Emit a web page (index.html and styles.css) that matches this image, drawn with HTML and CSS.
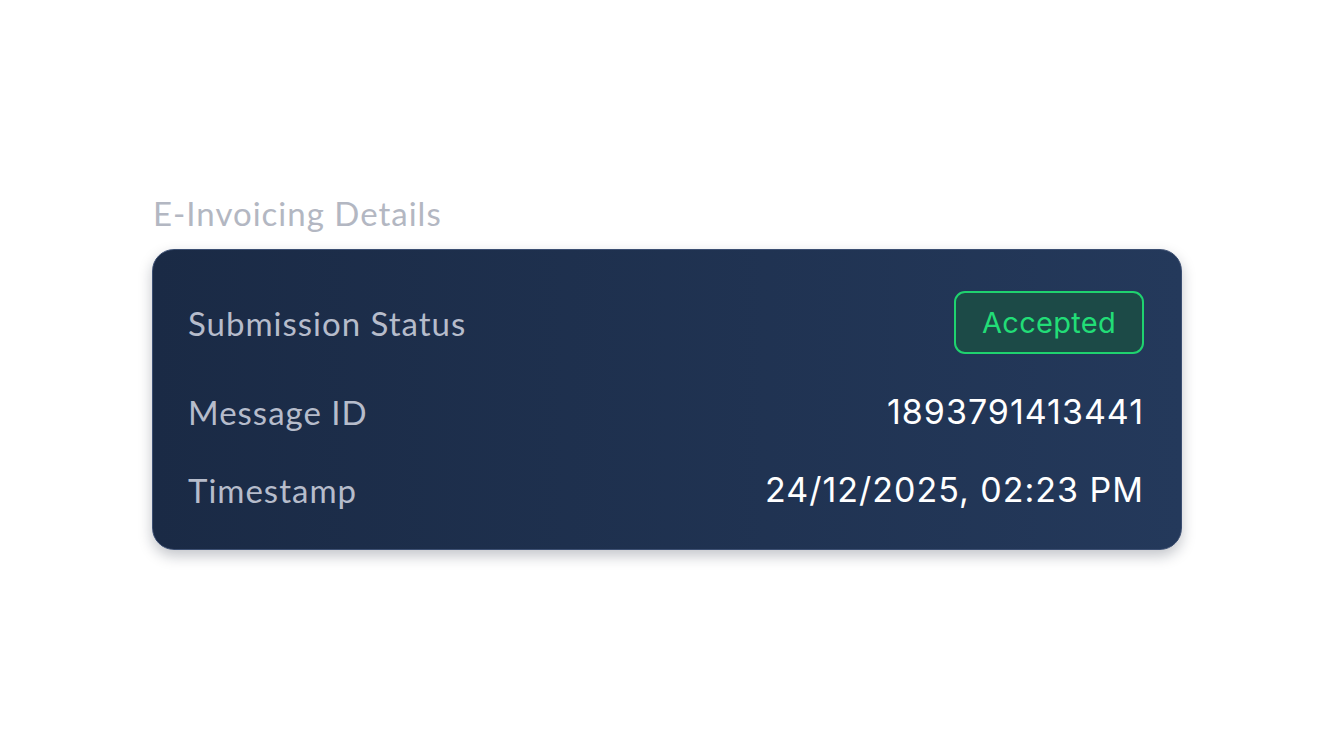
FILE: index.html
```html
<!DOCTYPE html>
<html>
<head>
<meta charset="utf-8">
<link rel="stylesheet" href="styles.css">
</head>
<body>
<main class="page">
  <section class="section">
    <h2 class="title">E-Invoicing Details</h2>
    <div class="card">
      <div class="row">
        <span class="label">Submission Status</span>
        <span class="badge">Accepted</span>
      </div>
      <div class="row">
        <span class="label">Message ID</span>
        <span class="value">1893791413441</span>
      </div>
      <div class="row">
        <span class="label">Timestamp</span>
        <span class="value">24/12/2025, 02:23 PM</span>
      </div>
    </div>
  </section>
</main>
</body>
</html>
```
FILE: styles.css
```css
html, body {
  margin: 0;
  padding: 0;
  background: #ffffff;
}
.page {
  width: 1332px;
  height: 738px;
  padding-top: 193px;
  padding-left: 152px;
  box-sizing: border-box;
}
.section {
  width: 1030px;
}
.title {
  margin: 0 0 16px 1px;
  font-family: "Lato", "Inter", sans-serif;
  font-weight: 400;
  font-size: 33px;
  letter-spacing: 1px;
  line-height: 40px;
  color: #b3b7c2;
}
.card {
  box-sizing: border-box;
  width: 1030px;
  height: 301px;
  border: 1.5px solid #3c4f72;
  border-radius: 22px;
  background: linear-gradient(90deg, #1a2a45 0%, #24395b 100%);
  box-shadow: 0 6px 14px rgba(15, 23, 42, 0.25);
  padding: 41px 37px 0 35px;
  display: flex;
  flex-direction: column;
  gap: 38px;
}
.row {
  display: flex;
  justify-content: space-between;
  align-items: center;
}
.label {
  font-family: "Lato", "Inter", sans-serif;
  font-size: 33px;
  letter-spacing: 1px;
  line-height: 40px;
  color: #b6bccb;
}
.value {
  font-family: "Inter", sans-serif;
  font-size: 34px;
  letter-spacing: 1px;
  line-height: 40px;
  color: #ffffff;
}
.badge {
  box-sizing: border-box;
  height: 63px;
  width: 190px;
  display: flex;
  align-items: center;
  justify-content: center;
  border: 2px solid #1fd26f;
  border-radius: 11px;
  background: #1c4a47;
  color: #22dd77;
  font-family: "Inter", sans-serif;
  font-size: 29px;
  letter-spacing: 0.3px;
}
```
